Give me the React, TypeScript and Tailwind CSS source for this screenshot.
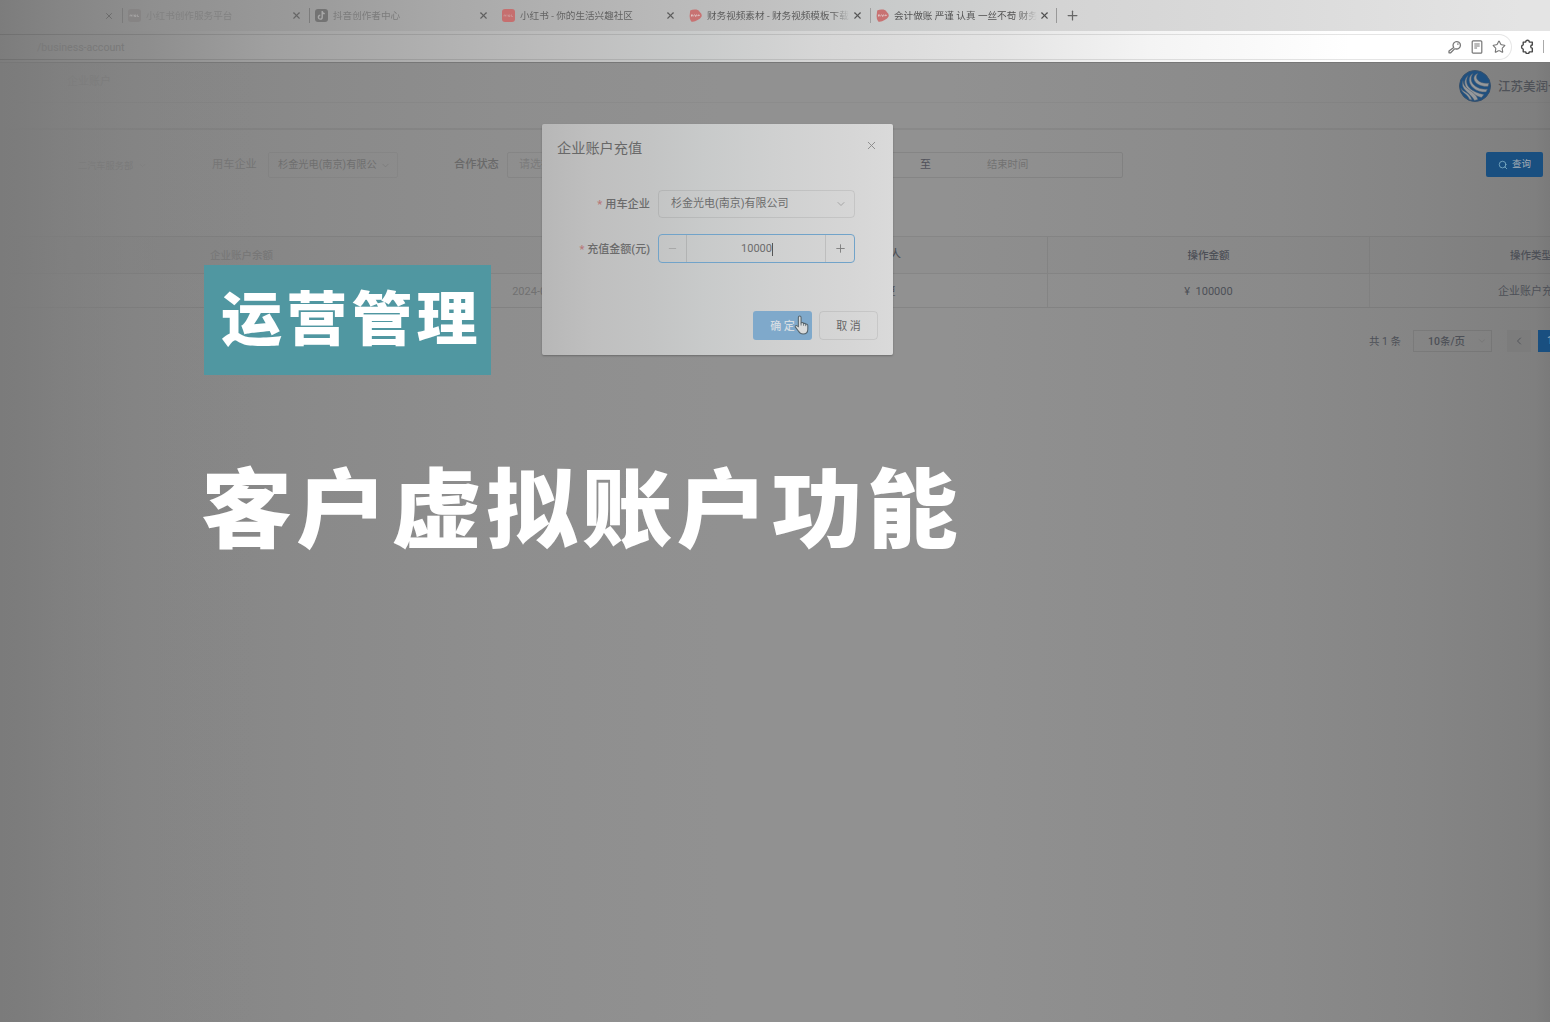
import type { ReactNode } from "react";
import { ChevronDown, ChevronLeft, Minus, Plus, Search, Star, X } from "lucide-react";

type Tab = {
  title: string;
  textClass: string;
  closeClass: string;
  lineClass: string;
  icon: ReactNode;
};

const SquareIcon = ({ className }: { className: string }) => (
  <svg viewBox="0 0 13 13" className={`size-[13px] ${className}`}>
    <rect width="13" height="13" rx="3" fill="currentColor" />
    <path d="M2 7.5V6h1.5v1.5M5 5.5v2M6.5 6h1.5v1.5H6.5zM9.5 5.5v2h1.5" fill="none" stroke="#ddd" strokeOpacity=".35" strokeWidth=".8" />
  </svg>
);

const NoteIcon = () => (
  <svg viewBox="0 0 13 13" className="size-[13px]">
    <rect width="13" height="13" rx="3" fill="#737373" />
    <path d="M7.2 2v6.2a1.9 1.9 0 1 1-1.9-1.9M7.2 2.3c.2 1.4 1.2 2.2 2.6 2.3" fill="none" stroke="#a8a8a8" strokeWidth="1.4" />
  </svg>
);

const BlobIcon = () => (
  <svg viewBox="0 0 13 13" className="size-[13px] text-[#c87272]">
    <path d="M1.2 1.6Q4 0 7.5.6 10 1.200 11.200 3.500 13.200 5 12.600 7.600 11.500 9.800 8.600 10.900 5 13.300 2.200 12.400.6 11 .6 7Z" fill="currentColor" />
    <path d="M2.500 7.500V5.800l1.600.5v1.200M5.500 5.500l1.200 2 .9-2M9 7.200V6l1.800.4" fill="none" stroke="#e2d0d0" strokeWidth=".9" />
  </svg>
);

const tabs: Tab[] = [
  {
    title: "小红书创作服务平台",
    textClass: "text-[#828282]",
    closeClass: "text-[#666]",
    lineClass: "bg-[#7b7b7b]",
    icon: <SquareIcon className="text-[#868484]" />,
  },
  {
    title: "抖音创作者中心",
    textClass: "text-[#7c7c7c]",
    closeClass: "text-[#5f5f5f]",
    lineClass: "bg-[#7c7c7c]",
    icon: <NoteIcon />,
  },
  {
    title: "小红书 - 你的生活兴趣社区",
    textClass: "text-[#636363]",
    closeClass: "text-[#5c5c5c]",
    lineClass: "bg-transparent",
    icon: <SquareIcon className="text-[#c66f6f]" />,
  },
  {
    title: "财务视频素材 - 财务视频模板下载",
    textClass: "text-[#5c5c5c]",
    closeClass: "text-[#565656]",
    lineClass: "bg-transparent",
    icon: <BlobIcon />,
  },
  {
    title: "会计做账 严谨 认真 一丝不苟 财务",
    textClass: "text-[#545454]",
    closeClass: "text-[#505050]",
    lineClass: "bg-[#a0a0a0]",
    icon: <BlobIcon />,
  },
];

function BrowserBar() {
  return (
    <div className="h-[63px] border-b border-[#777]">
      {/* tabs */}
      <div className="flex h-[31px] items-center bg-[linear-gradient(90deg,#7c7c7c_0,#858585_60px,#8f8f8f_150px,#9a9a9a_300px,#a8a8a8_440px,#b6b6b6_620px,#c0c0c0_760px,#c8caca_880px,#d4d4d4_1060px,#dadada_1250px,#e4e4e4_1520px)] text-[9.6px]">
        <div className="flex w-[122px] shrink-0 justify-end pr-[8px]">
          <X className="size-[10px] text-[#666]" strokeWidth={2} />
        </div>
        {tabs.map((tab) => (
          <div key={tab.title} className="flex w-[187px] shrink-0 items-center">
            <span className={`h-[15px] w-px ${tab.lineClass}`} />
            <span className="ml-[5px]">{tab.icon}</span>
            <span className={`ml-[5px] w-[143px] overflow-hidden whitespace-nowrap pt-[2px] [mask-image:linear-gradient(90deg,#000_125px,transparent_143px)] ${tab.textClass}`}>
              {tab.title}
            </span>
            <X className={`ml-[2px] size-[11px] shrink-0 ${tab.closeClass}`} strokeWidth={2.4} />
          </div>
        ))}
        <span className="ml-[-1px] h-[15px] w-px shrink-0 bg-[#999]" />
        <Plus className="ml-[8px] size-[15px] shrink-0 text-[#666]" strokeWidth={2} />
      </div>

      {/* address bar */}
      <div className="flex h-[31px] items-center bg-[linear-gradient(90deg,#7c7c7c_0,#858585_60px,#8e8e8e_150px,#a0a0a0_270px,#b0b0b0_430px,#bebebe_570px,#c8caca_690px,#d6d6d6_820px,#e4e4e4_1000px,#f4f4f4_1150px,#fff_1350px)]">
        <div className="flex h-[26px] w-[1512px] shrink-0 items-center justify-between rounded-r-full border border-l-0 border-black/10 pl-[37px] pr-[5px]">
          <span className="pt-[3px] text-[10.600px] text-[#797979]">/business-account</span>
          <div className="flex items-center gap-[8px] text-[#777]">
            <svg viewBox="0 0 14 14" className="size-[14px]" fill="none" stroke="currentColor" strokeWidth="1.300">
              <path d="M5.700 7.400A3.700 3.700 0 1 1 7.600 8.800L6.600 8.900 2.700 12.800H1v-1.900Z" strokeLinejoin="round" />
              <circle cx="9.900" cy="4.100" r=".8" fill="currentColor" stroke="none" />
            </svg>
            <svg viewBox="0 0 14 14" className="size-[14px]" fill="none" stroke="currentColor" strokeWidth="1.200">
              <rect x="2.200" y=".8" width="9.600" height="12.400" rx="1" />
              <path d="M4.300 4h5.400M4.300 6h5.400M4.300 8h2.800" />
            </svg>
            <Star className="size-[14px]" strokeWidth={1.9} />
          </div>
        </div>
        <svg viewBox="0 0 14 14" className="ml-[8px] size-[15px] shrink-0 text-[#484848]" fill="none" stroke="currentColor" strokeWidth="1.300">
          <path d="M3 2.900h2.300a1.700 1.700 0 0 1 3.400 0H11.500v2.700a1.500 1.500 0 0 0 0 3V12H8.700a1.700 1.700 0 0 1-3.400 0H3V9.600a2.200 2.200 0 0 1 0-4.200Z" strokeLinejoin="round" />
        </svg>
        <span className="ml-[8px] h-[13px] w-px bg-[#aaa]" />
      </div>
    </div>
  );
}

function Logo() {
  return (
    <svg viewBox="0 0 32 32" className="size-[32px] shrink-0">
      <circle cx="16" cy="16" r="15.500" fill="#1f5080" stroke="#37506b" />
      <g fill="#95989b" stroke="#4a5a6c" strokeWidth=".5">
        <path d="M19 3.500C11 6 15 17 29 16.500L30 13C22 14.500 14 9 19 3.500Z" />
        <path d="M14 3.500C5 9 13 23 27 22L28.500 19C18 20.500 8 12 14 3.500Z" />
        <path d="M9 5.500C1 13 9 24 22.500 27.500L25 24.500C13 22 4 16 9 5.500Z" />
        <path d="M4 10.500C1 20 10 21 15.500 30.500L19 29.500C16 20 4 20 4 10.500Z" />
        <path d="M2 18C3 24 8 23 10.500 29.500L13 30C10 21 4 23 2 18Z" />
      </g>
    </svg>
  );
}

function Filters() {
  return (
    <div className="flex h-[26px] items-center whitespace-nowrap pl-[78px] text-[11px]">
      <span className="w-[55px] pt-px text-[9.200px] text-[#747474]">二汽车服务部</span>
      <ChevronDown className="ml-[5px] size-[9px] text-[#7d7d7d]" />
      <span className="ml-[65px] w-[56px] pt-px text-[11.200px] text-[#747474]">用车企业</span>
      <div className="flex h-[26px] w-[130px] items-center justify-between rounded-[2px] border border-black/[0.04] pl-[9px] pr-[6px] text-[#6f6f6f]">
        <span className="text-[10.200px]">杉金光电(南京)有限公</span>
        <ChevronDown className="size-[11px] text-[#777]" strokeWidth={1.500} />
      </div>
      <span className="ml-[56px] w-[53px] pt-px text-[11.200px] font-medium text-[#696969]">合作状态</span>
      <div className="flex h-[26px] w-[130px] items-center rounded-[2px] border border-black/[0.06] pl-[11px] text-[#7b7b7b]">请选择</div>
      <div className="ml-[56px] flex h-[26px] w-[430px] items-center rounded-[2px] border border-black/[0.08]">
        <span className="ml-[226px] text-[#50525a]">至</span>
        <span className="ml-[56px] text-[10.300px] text-[#727272]">结束时间</span>
      </div>
      <button className="mb-px ml-auto mr-[7px] flex h-[25px] w-[57px] items-center justify-center gap-[4px] rounded-[2px] bg-[#194f80] text-[9.500px] text-[#a3adb5]">
        <Search className="size-[10px] text-[#7fb0c5]" strokeWidth={2} />
        查询
      </button>
    </div>
  );
}

function Records() {
  return (
    <div className="w-[1691px] text-[11px]">
      <div className="grid h-[38px] grid-cols-[82px_repeat(5,322px)] items-center border-y border-black/[0.06] bg-black/[0.008] text-center text-[10.500px] font-medium">
        <span />
        <span className="pr-[3px] pt-px text-[#777]">企业账户余额</span>
        <span />
        <span className="flex h-full items-center justify-center border-r border-black/[0.07] pr-[4px] pt-px text-[11px] text-[#515359]">操作人</span>
        <span className="flex h-full items-center justify-center border-r border-black/[0.05] pt-px text-[#4d5057]">操作金额</span>
        <span className="pt-px text-[#4d5057]">操作类型</span>
      </div>
      <div className="grid h-[34px] grid-cols-[82px_repeat(5,322px)] items-center border-b border-black/[0.08] text-center">
        <span />
        <span />
        <span className="pr-[5px] pt-[3px] text-[#717171]">2024-05-20 14:32:16</span>
        <span className="flex h-full items-center justify-center border-r border-black/[0.07] pr-[4px] pt-[3px] text-[#515359]">钱更</span>
        <span className="flex h-full items-center justify-center border-r border-black/[0.05] pt-[3px] text-[#4d5057]">¥&nbsp; 100000</span>
        <span className="pt-[3px] text-[#4d5057]">企业账户充值</span>
      </div>
    </div>
  );
}

function Pagination() {
  return (
    <div className="mt-[22px] flex h-[22px] items-center pl-[1369px] text-[10.500px] text-[#4d5057]">
      <span className="w-[44px] shrink-0 pt-px">共 1 条</span>
      <div className="flex h-[22px] w-[79px] shrink-0 items-center justify-between border border-black/[0.08] pl-[14px] pr-[4px] font-medium">
        <span className="pt-px">10条/页</span>
        <ChevronDown className="size-[10px] text-[#707070]" strokeWidth={1.500} />
      </div>
      <span className="ml-[15px] flex h-[22px] w-[24px] shrink-0 items-center justify-center bg-[#7c7c7c]">
        <ChevronLeft className="size-[12px]" strokeWidth={1.800} />
      </span>
      <span className="ml-[7px] flex h-[22px] w-[24px] shrink-0 items-center justify-center bg-[#194f80] text-[#a3adb5]">1</span>
    </div>
  );
}

function Cursor() {
  return (
    <svg viewBox="0 0 14 19" className="absolute left-[252px] top-[191px] h-[20px] w-[15px]">
      <path
        d="M4 11V2.300a1.300 1.300 0 0 1 2.600 0V7.500l1-.3c.7-.1 1.200.3 1.300.8l.9-.1c.7 0 1.100.4 1.200.9 1.200-.4 2 .2 2 1.300v3.400c0 2.500-1.500 4.500-4.500 4.500-2.600 0-3.500-1.200-4.500-2.800L1.200 11.500c-.6-1.200.8-2 1.600-1.200Z"
        fill="#d9dbdb"
        stroke="#56646c"
        strokeWidth="1"
      />
      <path d="M6.600 7.500V10M9 8.200v2M11 9v1.600" stroke="#56646c" strokeWidth=".8" />
    </svg>
  );
}

function RechargeDialog() {
  return (
    <div className="absolute left-[542px] top-[124px] h-[231px] w-[351px] rounded-[2px] bg-[linear-gradient(90deg,#b7b7b7_0,#bfbfbf_50px,#c3c4c4_110px,#c8caca_160px,#cfd0d0_230px,#d6d6d6_310px,#dadada_352px)] shadow-[0_1px_2px_rgba(0,0,0,0.25)]">
      <div className="flex items-center justify-between pl-[15px] pr-[15px] pt-[14px]">
        <h2 className="text-[14.200px] leading-[20px] text-[#686868]">企业账户充值</h2>
        <X className="mb-[5px] size-[13px] text-[#888]" strokeWidth={1.700} />
      </div>

      <div className="mt-[31px] flex h-[29px] items-center text-[11.200px]">
        <span className="w-[108px] pt-[3px] text-right font-medium text-[#6b6b6b]">
          <span className="mr-[3px] text-[#b87878]">*</span>用车企业
        </span>
        <div className="ml-[8px] flex h-[28px] w-[197px] items-center justify-between rounded-[4px] border border-black/[0.08] pl-[12px] pr-[7px] text-[11px] text-[#6c6c6c]">
          <span className="pt-[2px]">杉金光电(南京)有限公司</span>
          <ChevronDown className="size-[12px] text-[#999]" strokeWidth={1.600} />
        </div>
      </div>

      <div className="mt-[16px] flex h-[29px] items-center text-[11px]">
        <span className="w-[108px] pt-[3px] text-right font-medium text-[#6b6b6b]">
          <span className="mr-[3px] text-[#b87878]">*</span>充值金额(元)
        </span>
        <div className="ml-[8px] flex h-[29px] w-[197px] items-center rounded-[4px] border border-[#71a3c9] text-[11px] text-[#6c6c6c]">
          <span className="flex h-full w-[28px] items-center justify-center border-r border-black/10">
            <Minus className="size-[11px] text-[#a0a0a0]" strokeWidth={1.700} />
          </span>
          <span className="flex flex-1 items-center justify-center pl-[2px] pt-[2px]">
            10000<span className="h-[13px] w-px bg-[#555]" />
          </span>
          <span className="flex h-full w-[29px] items-center justify-center border-l border-black/10">
            <Plus className="size-[13px] text-[#7c7c7c]" strokeWidth={1.700} />
          </span>
        </div>
      </div>

      <div className="mt-[48px] flex justify-end gap-[7px] pr-[15px] text-[11px]">
        <button className="h-[29px] w-[59px] rounded-[3px] bg-[#7fa9cb] pt-[3px] font-medium text-[#d5dde3]">确 定</button>
        <button className="h-[29px] w-[59px] rounded-[4px] border border-black/[0.08] pt-[3px] text-[#666]">取 消</button>
      </div>
      <Cursor />
    </div>
  );
}

export default function App() {
  return (
    <div className="relative h-[1022px] w-[1550px] overflow-hidden bg-[linear-gradient(90deg,#797979_0,#7c7c7c_30px,#828282_90px,#868686_180px,#8a8a8a_320px,#8e8e8e_500px,#919191_720px,#919191_950px,#8e8e8e_1080px,#8a8a8a_1280px,#858585_1420px,#7f7f7f_1535px,#7a7a7a_1550px)] font-['Roboto','Noto_Sans_CJK_SC',sans-serif]">
      <BrowserBar />

      {/* page header */}
      <div className="flex h-[40px] items-center border-b border-black/[0.03]">
        <span className="ml-[67px] text-[11px] text-[#777]">企业账户</span>
        <div className="ml-auto flex w-[91px] items-center gap-[7px] overflow-hidden whitespace-nowrap pt-[7px]">
          <Logo />
          <span className="pt-[3px] text-[12.500px] font-medium text-[#4f5258]">江苏美润一</span>
        </div>
      </div>
      <div className="h-[27px] border-b-2 border-black/[0.05]" />

      <div className="mt-[22px]">
        <Filters />
      </div>
      <div className="mt-[58px]">
        <Records />
      </div>
      <Pagination />

      {/* left fade */}
      <div className="absolute bottom-0 left-0 top-[63px] w-[260px] bg-[linear-gradient(90deg,#7b7b7b_0,rgba(128,128,128,0.7)_60px,rgba(132,132,132,0.35)_130px,rgba(136,136,136,0)_260px)]" />

      <RechargeDialog />

      {/* captions */}
      <div className="absolute left-[204px] top-[265px] flex h-[110px] w-[287px] items-start bg-[#5097a1] pl-[17px] pt-[21px]">
        <span className="origin-top scale-y-[0.95] whitespace-nowrap font-['Noto_Sans_CJK_SC',sans-serif] text-[61px] leading-none font-black tracking-[4.200px] text-white">
          运营管理
        </span>
      </div>
      <h1 className="absolute left-[201px] top-[460px] origin-top scale-y-[0.95] whitespace-nowrap font-['Noto_Sans_CJK_SC',sans-serif] text-[91px] leading-none font-black tracking-[4.100px] text-white">
        客户虚拟账户功能
      </h1>
    </div>
  );
}
